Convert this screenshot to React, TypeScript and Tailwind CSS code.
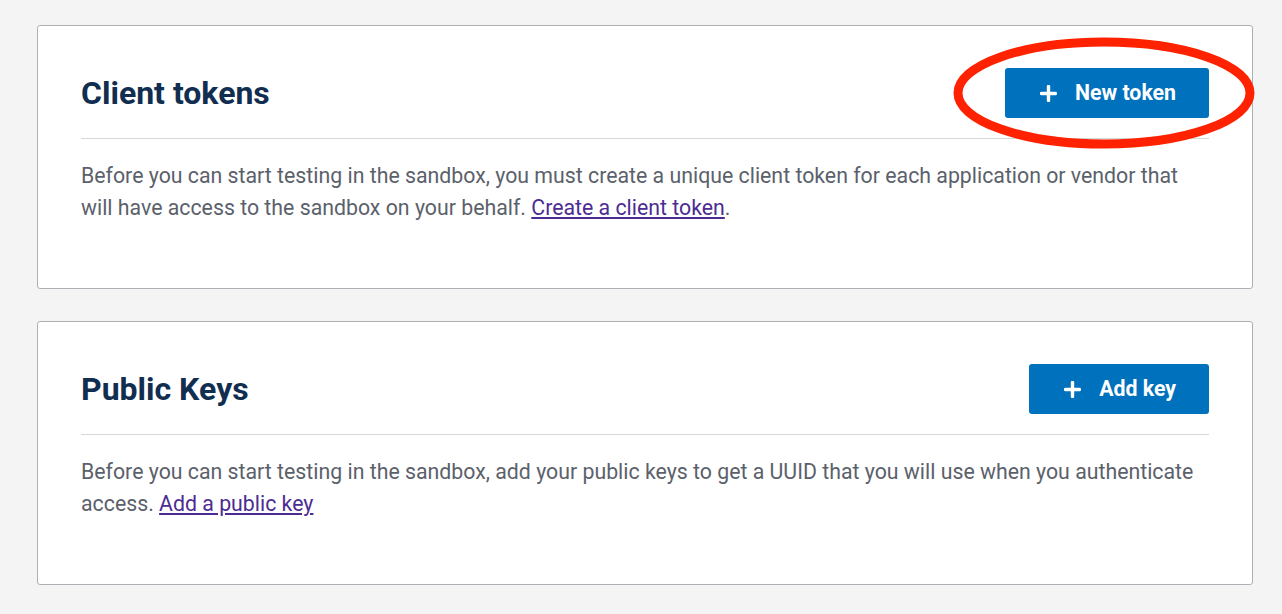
function PlusIcon() {
  return (
    <svg width="17" height="17" viewBox="0 0 17 17" className="shrink-0">
      <path d="M8.5 1.5v14M1.5 8.5h14" stroke="white" strokeWidth="3.4" strokeLinecap="round" />
    </svg>
  );
}

function PanelButton({ label }: { label: string }) {
  return (
    <button className="flex h-[50px] items-center gap-[18px] rounded-[3px] bg-[#0071bc] pl-[35px] pr-[33px] text-[21.3px] font-bold text-white">
      <PlusIcon />
      <span>{label}</span>
    </button>
  );
}

function Panel({
  title,
  button,
  children,
}: {
  title: string;
  button: string;
  children: React.ReactNode;
}) {
  return (
    <section className="w-[1216px] rounded-[3px] border border-[#aeb0b5] bg-white px-[43px] pt-[42px] pb-[64px]">
      <div className="flex h-[50px] items-center justify-between">
        <h2 className="text-[32px] font-bold leading-none text-[#112e51]">{title}</h2>
        <PanelButton label={button} />
      </div>
      <hr className="mt-[20px] border-t border-[#d6d7d9]" />
      <p className="mt-[21px] text-[21.3px] leading-[32px] text-[#5b616b]">{children}</p>
    </section>
  );
}

export default function App() {
  return (
    <div
      className="relative min-h-[614px] bg-[#f4f4f4] pt-[25px] pl-[37px]"
      style={{ fontFamily: "Roboto, 'Liberation Sans', sans-serif" }}
    >
      <div className="flex flex-col gap-[32px]">
        <Panel title="Client tokens" button="New token">
          Before you can start testing in the sandbox, you must create a unique client token for each
          application or vendor that will have access to the sandbox on your behalf.{" "}
          <a href="#" className="text-[#4c2c92] underline">
            Create a client token
          </a>
          .
        </Panel>
        <Panel title="Public Keys" button="Add key">
          Before you can start testing in the sandbox, add your public keys to get a UUID that you will
          use when you authenticate access.{" "}
          <a href="#" className="text-[#4c2c92] underline">
            Add a public key
          </a>
        </Panel>
      </div>

      {/* annotation ring around the new token button */}
      <svg className="pointer-events-none absolute left-[945px] top-[30px]" width="320" height="126">
        <ellipse cx="159" cy="63" rx="146" ry="51" fill="none" stroke="#ff2200" strokeWidth="9" />
      </svg>
    </div>
  );
}
